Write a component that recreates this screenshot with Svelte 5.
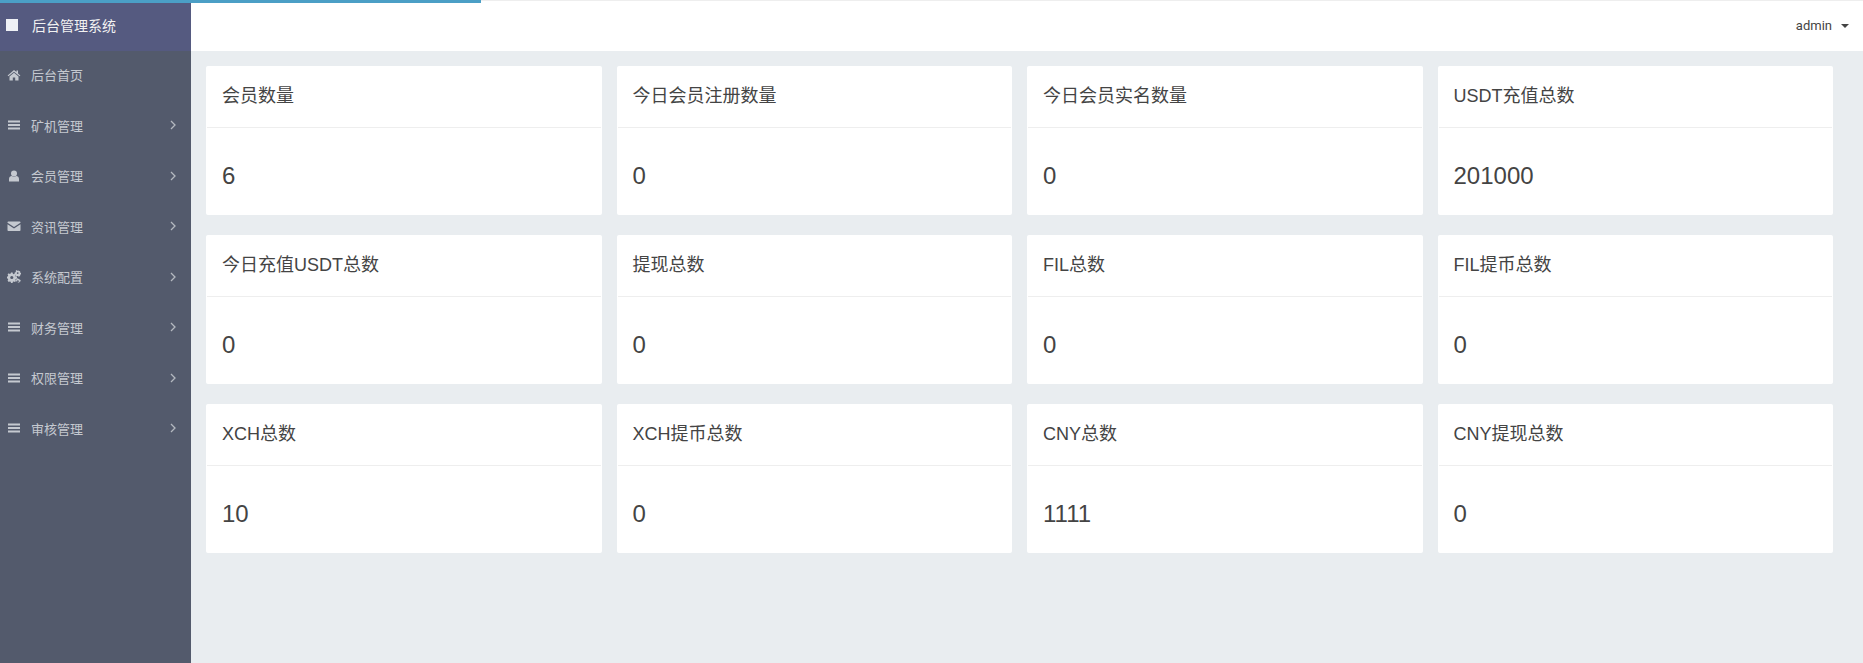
<script>
  const stats = [
    ['会员数量', 6], ['今日会员注册数量', 0], ['今日会员实名数量', 0], ['USDT充值总数', 201000],
    ['今日充值USDT总数', 0], ['提现总数', 0], ['FIL总数', 0], ['FIL提币总数', 0],
    ['XCH总数', 10], ['XCH提币总数', 0], ['CNY总数', 1111], ['CNY提现总数', 0]
  ];

  const menu = [
    { name: '后台首页', icon: 'home' },
    { name: '矿机管理', icon: 'bars', sub: true },
    { name: '会员管理', icon: 'user', sub: true },
    { name: '资讯管理', icon: 'mail', sub: true },
    { name: '系统配置', icon: 'cogs', sub: true },
    { name: '财务管理', icon: 'bars', sub: true },
    { name: '权限管理', icon: 'bars', sub: true },
    { name: '审核管理', icon: 'bars', sub: true }
  ];
</script>

<div class="progress"></div>

<div class="page">
  <aside class="sidebar">
    <div class="brand">
      <span class="brand-mark"></span>
      <span>后台管理系统</span>
    </div>
    <nav class="menu">
      {#each menu as item}
        <div class="menu-item">
          <svg class="menu-icon" viewBox="0 0 14 14" width="14" height="14" fill="currentColor">
            {#if item.icon === 'home'}
              <path d="M7 2 .6 7.4l.8.9L7 3.7l5.6 4.6.8-.9L11 5.400V2.600H9.500V4.100Z" />
              <path d="M7 4.800 2.500 8.500V12.500H5.800V9.500H8.200V12.500H11.500V8.500Z" />
            {:else if item.icon === 'bars'}
              <rect x="1" y="2.500" width="12" height="2" />
              <rect x="1" y="6" width="12" height="2" />
              <rect x="1" y="9.500" width="12" height="2" />
            {:else if item.icon === 'user'}
              <circle cx="7" cy="4.500" r="3" />
              <path d="M2 12.500V10c0-1.800 1.300-3 2.800-3 .6.500 1.300.8 2.200.8s1.600-.3 2.200-.8C10.700 7 12 8.200 12 10v2.500Z" />
            {:else if item.icon === 'mail'}
              <path d="M.5 3.300c0-.5.4-.8.8-.8h11.400c.4 0 .8.300.8.800v.5L7 8 .5 3.800Z" />
              <path d="M.5 5.200V11.200c0 .4.400.8.800.8h11.400c.4 0 .8-.4.800-.8V5.200L7 9.500Z" />
            {:else}
              <path fill-rule="evenodd" d="M4 2.600h1.600l.3 1.200.9.4 1.100-.6 1.100 1.100-.6 1.100.4.900 1.200.3v1.600l-1.200.3-.4.900.6 1.100-1.100 1.100-1.100-.6-.9.400-.3 1.200H4l-.3-1.200-.9-.4-1.100.6L.6 10.600l.6-1.100-.4-.9L-.4 8.300V6.700l1.200-.3.4-.9-.6-1.100 1.100-1.100 1.100.6.900-.4ZM4.800 5.900a1.600 1.600 0 1 0 0 3.200 1.600 1.600 0 0 0 0-3.200Z" />
              <path fill-rule="evenodd" d="M11.500.6l1.800.8-.3.9.4.5.9.100v1.600l-.9.100-.4.500.3.900-1.800.8-.5-.7h-.700l-.5.700-1.100-.6.200-1-.3-.600-.9-.2V2.500l.9-.2.300-.6-.2-1 1.100-.6.500.7h.700ZM10.700 2.200a.9.900 0 1 0 0 1.800.9.900 0 0 0 0-1.800Z" />
              <path fill-rule="evenodd" d="M11 8.800l1.300.1.300.9 1 .3v1.200l-1 .4-.3.800-1.300.1-.6-.8-.9-.2-.6-1 .5-.9-.1-.9.900-.4.200-.3ZM10.900 10.300a.9.900 0 1 0 0 1.800.9.900 0 0 0 0-1.800Z" />
            {/if}
          </svg>
          <span class="menu-name">{item.name}</span>
          {#if item.sub}
            <svg class="chevron" viewBox="0 0 6 10" width="6" height="10" fill="none" stroke="currentColor" stroke-width="1.300">
              <path d="M1 1l4 4-4 4" />
            </svg>
          {/if}
        </div>
      {/each}
    </nav>
  </aside>

  <div class="content">
    <header class="topbar">
      <span class="user">admin</span>
      <span class="caret"></span>
    </header>
    <main class="grid">
      {#each stats as [title, value]}
        <section class="card">
          <div class="card-title">{title}</div>
          <div class="card-value">{value}</div>
        </section>
      {/each}
    </main>
  </div>
</div>

<style>
  :global(body) {
    margin: 0;
    background: #e9edf0;
    font-family: "Liberation Sans", "Noto Sans CJK SC", sans-serif;
    color: #333;
  }

  .progress {
    position: absolute;
    top: 0;
    left: 0;
    width: 481px;
    height: 3px;
    background: #4b9fc6;
  }

  .page {
    display: flex;
    height: 663px;
    overflow: hidden;
  }

  .sidebar {
    width: 191px;
    flex: none;
    background: #535a6c;
  }

  .brand {
    display: flex;
    align-items: center;
    gap: 14px;
    height: 51px;
    padding: 0 0 2px 6px;
    box-sizing: border-box;
    background: #555a80;
    color: #f2f2f2;
    font-size: 14px;
    font-family: "Noto Sans CJK SC", sans-serif;
  }

  .brand-mark {
    width: 12px;
    height: 12px;
    background: #eef0f5;
  }

  .menu {
    display: flex;
    flex-direction: column;
    margin-top: -1.500px;
  }

  .menu-item {
    display: flex;
    align-items: center;
    height: 50.500px;
    padding: 0 15px 0 7px;
    color: #c5c9d0;
    font-size: 13px;
    font-family: "Noto Sans CJK SC", sans-serif;
  }

  .menu-icon {
    flex: none;
    margin-right: 10px;
  }

  .menu-name {
    flex: 1;
  }

  .chevron {
    color: #b4b8c0;
  }

  .content {
    flex: 1;
    min-width: 0;
  }

  .topbar {
    display: flex;
    align-items: center;
    justify-content: flex-end;
    gap: 9px;
    height: 51px;
    box-sizing: border-box;
    padding: 0 14px 2px 0;
    background: #fff;
    border-top: 1px solid #eee;
    font-size: 13px;
    font-family: Roboto, sans-serif;
    color: #444;
  }

  .caret {
    width: 0;
    height: 0;
    border-left: 4px solid transparent;
    border-right: 4px solid transparent;
    border-top: 4px solid #444;
    margin-top: 2px;
  }

  .grid {
    display: grid;
    grid-template-columns: repeat(4, 395.500px);
    gap: 19.800px 15px;
    padding: 15px;
  }

  .card {
    height: 149.200px;
    background: #fff;
    border-radius: 2px;
  }

  .card-title {
    height: 61px;
    margin: 0 1px;
    padding: 0 15px;
    border-bottom: 1px solid #eee;
    font-size: 18px;
    line-height: 60px;
    color: #444;
  }

  .card-value {
    padding: 33px 16px 0;
    font-size: 24px;
    line-height: 30px;
    color: #444;
  }
</style>
